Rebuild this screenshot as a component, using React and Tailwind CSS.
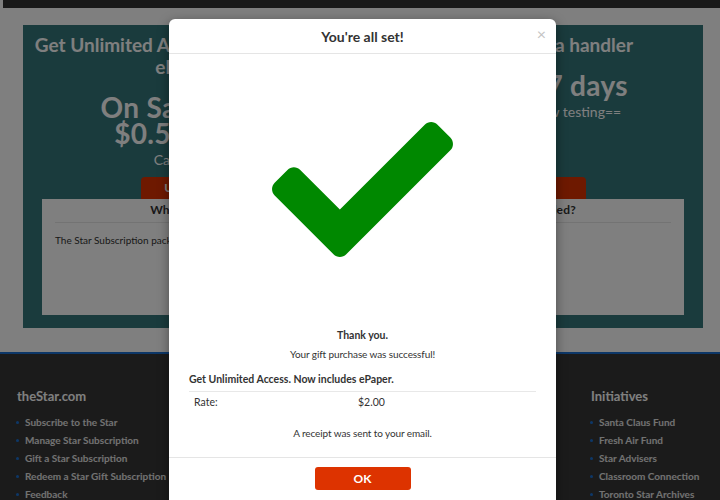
import React from 'react'

const footerCols = [
  {
    title: 'theStar.com',
    items: [
      'Subscribe to the Star',
      'Manage Star Subscription',
      'Gift a Star Subscription',
      'Redeem a Star Gift Subscription',
      'Feedback',
    ],
  },
  {
    title: 'About',
    items: ['Atkinson Principles', 'Glossary', 'Trust Project', 'Contact Us', 'Contact Webmaster'],
  },
  {
    title: 'Legal',
    items: ['Terms of Use', 'Privacy Policy', 'Accessibility', 'Advertising Terms', 'Cookie Policy'],
  },
  {
    title: 'Initiatives',
    items: [
      'Santa Claus Fund',
      'Fresh Air Fund',
      'Star Advisers',
      'Classroom Connection',
      'Toronto Star Archives',
    ],
  },
]

const CheckIcon = () => (
  <svg viewBox="0 65 512 382" width="181" height="135" className="block">
    <path
      fill="#008800"
      d="M173.898 439.404l-166.4-166.4c-9.997-9.997-9.997-26.206 0-36.204l36.203-36.204c9.997-9.998 26.207-9.998 36.204 0L192 312.69 432.095 72.596c9.997-9.997 26.207-9.997 36.204 0l36.203 36.204c9.997 9.997 9.997 26.206 0 36.204l-294.4 294.401c-9.998 9.997-26.207 9.997-36.204-.001z"
    />
  </svg>
)

const FooterList = ({ title, items }) => (
  <div>
    <h4 className="text-[13px] font-bold text-white leading-[16px] mb-[9px]">{title}</h4>
    <ul className="flex flex-col">
      {items.map((item) => (
        <li key={item} className="flex items-center h-[18px] text-[10px] font-bold text-[#e4e4e4] whitespace-nowrap">
          <span className="w-[3px] h-[3px] rounded-full bg-[#1a6fd1] ml-[-1px] mr-[6px]"></span>
          {item}
        </li>
      ))}
    </ul>
  </div>
)

export default function App() {
  return (
    <div className="relative w-[720px] h-[500px] overflow-hidden bg-white font-['Lato',sans-serif]">
      {/* Page */}
      <div className="ml-[3px] h-[8px] bg-[#333333]"></div>

      <div className="ml-[23px] mt-[17px] w-[680px] bg-[#35767a] px-[19px] pt-[9px] pb-[13px]">
        <div className="grid grid-cols-2">
          {/* left offer */}
          <div className="flex flex-col items-center text-center text-white">
            <h2 className="text-[19px] font-bold leading-[22px] whitespace-nowrap">
              Get Unlimited Access. Now includes the
              <br />
              ePaper and
            </h2>
            <p className="mt-[16px] text-[28px] font-bold leading-[26px] tracking-[0.3px] whitespace-nowrap">
              On Sale for only
              <br />
              $0.50 / week!
            </p>
            <p className="mt-[6px] text-[14px] leading-[16px]">Cancel anytime.</p>
            <button className="mt-[9px] w-[124px] h-[22px] rounded-t-[4px] bg-[#dd3300] text-[12px] font-bold text-white">
              Unlock Access
            </button>
          </div>
          {/* right offer */}
          <div className="flex flex-col items-center text-center text-white">
            <h2 className="text-[19px] font-bold leading-[22px] whitespace-nowrap">Now testing out a handler</h2>
            <p className="mt-[16px] text-[28px] font-bold leading-[26px] tracking-[0.3px] whitespace-nowrap">A trial for 7 days</p>
            <p className="mt-[6px] text-[14px] leading-[16px] whitespace-nowrap">==This text is for now testing==</p>
            <button className="mt-auto w-[124px] h-[22px] rounded-t-[4px] bg-[#dd3300] text-[12px] font-bold text-white">
              Get Started
            </button>
          </div>
        </div>
        <div className="bg-white h-[116px] px-[13px] pt-[4px]">
          <h3 className="text-center text-[12px] font-bold leading-[14px] tracking-[0.15px] text-[#333] pb-[5px] border-b border-[#e6e6e6] whitespace-nowrap">
            What exactly is included with The Star Subscription, and what is not included?
          </h3>
          <p className="mt-[10px] text-[10px] text-[#333] leading-[14px]">
            The Star Subscription package includes unlimited digital access to thestar.com, the ePaper and the Star app.
          </p>
        </div>
      </div>

      <div className="mt-[24px] h-[2px] bg-[#1a6fd1]"></div>
      <div className="bg-[#373737] h-[200px] grid grid-cols-[191px_191px_192px_1fr] pl-[17px] pt-[34px]">
        {footerCols.map((col) => (
          <FooterList key={col.title} title={col.title} items={col.items} />
        ))}
      </div>

      {/* Overlay */}
      <div className="absolute inset-0 bg-black/50"></div>

      {/* Modal */}
      <div className="absolute left-[169px] top-[19px] w-[387px] h-[520px] bg-white rounded-[6px] shadow-[0_3px_12px_rgba(0,0,0,0.4)]">
        <div className="relative h-[35px] flex items-center justify-center border-b border-[#e5e5e5]">
          <h1 className="text-[14px] font-bold text-[#333]">You're all set!</h1>
          <span className="absolute right-[10px] top-[7px] text-[16px] leading-[16px] text-[#c4c4c4]">×</span>
        </div>
        <div className="px-[20px]">
          <div className="flex justify-center pt-[68px] pb-[71px]">
            <CheckIcon />
          </div>
          <p className="text-center text-[10.5px] font-bold text-[#333] leading-[14px]">Thank you.</p>
          <p className="mt-[5px] text-center text-[10px] tracking-[-0.1px] text-[#333] leading-[14px]">Your gift purchase was successful!</p>
          <p className="mt-[11px] text-[10.5px] font-bold text-[#333] leading-[14px] pb-[5px] border-b border-[#e8e8e8]">
            Get Unlimited Access. Now includes ePaper.
          </p>
          <div className="flex text-[10.5px] text-[#333] leading-[14px] pt-[3px]">
            <span className="pl-[5px] w-[169px]">Rate:</span>
            <span>$2.00</span>
          </div>
          <p className="mt-[17px] text-center text-[10px] tracking-[-0.1px] text-[#333] leading-[14px]">A receipt was sent to your email.</p>
        </div>
        <div className="mt-[17px] border-t border-[#e5e5e5] pt-[9px] flex justify-center">
          <button className="w-[96px] h-[23px] rounded-[3px] bg-[#dd3300] text-[12px] font-bold text-white">OK</button>
        </div>
      </div>
    </div>
  )
}
